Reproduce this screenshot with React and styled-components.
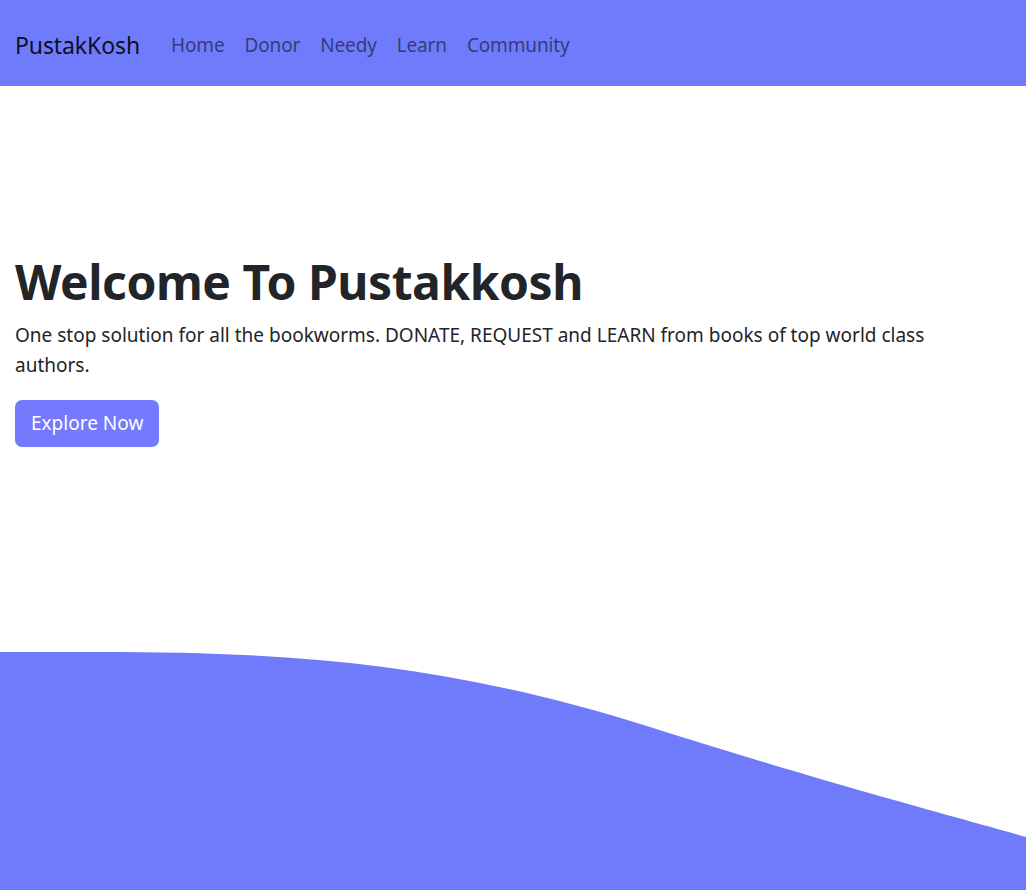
import React from 'react';
import styled, {createGlobalStyle} from "styled-components";

const Global = createGlobalStyle`
  body {
    margin: 0;
    font-family: "Noto Sans", "Open Sans", sans-serif;
    color: #212529;
    background: #fff;
  }
`;

const Page = styled.div`
  min-height: 890px;
  display: flex;
  flex-direction: column;
  overflow: hidden;
`;

const Nav = styled.nav`
  height: 86px;
  background: #707bfb;
  display: flex;
  align-items: center;
  padding: 3px 15px 0;
  box-sizing: border-box;
`;

const Brand = styled.a`
  font-size: 23px;
  color: rgba(0, 0, 0, 0.9);
  margin-right: 21px;
  letter-spacing: -0.1px;
  text-decoration: none;
`;

const Links = styled.ul`
  display: flex;
  list-style: none;
  margin: 0;
  padding: 0;
`;

const Link = styled.li`
  font-size: 19px;
  color: rgba(0, 0, 0, 0.55);
  padding: 0 10px;
  letter-spacing: -0.15px;
`;

const Hero = styled.section`
  padding: 167px 15px 0;
  flex: 1;
`;

const Title = styled.h1`
  font-size: 48px;
  font-weight: 700;
  line-height: 1.2;
  margin: 0 0 9px;
  letter-spacing: -0.45px;
`;

const Lead = styled.p`
  font-size: 19px;
  line-height: 30px;
  margin: 0 0 20px;
  max-width: 940px;
  letter-spacing: 0;
`;

const Button = styled.button`
  font-family: inherit;
  font-size: 19px;
  color: #fff;
  background: #7479fd;
  border: none;
  border-radius: 7px;
  height: 47px;
  padding: 0 16px;
  cursor: pointer;
`;

const Wave = styled.svg`
  display: block;
  width: 100%;
  height: 238px;
`;

const links = ["Home", "Donor", "Needy", "Learn", "Community"];

const App = () => {
    return (
        <Page>
            <Global/>
            <Nav>
                <Brand>PustakKosh</Brand>
                <Links>
                    {links.map(l => <Link key={l}>{l}</Link>)}
                </Links>
            </Nav>
            <Hero>
                <Title>Welcome To Pustakkosh</Title>
                <Lead>One stop solution for all the bookworms. DONATE, REQUEST and LEARN from books of top world class authors.</Lead>
                <Button>Explore Now</Button>
            </Hero>
            <Wave viewBox="0 0 1026 238" preserveAspectRatio="none">
                <path d="M0,0 L100,0 C300,0 450,12 650,75 C850,138 950,163 1026,185 L1026,238 L0,238 Z" fill="#707bfb"/>
            </Wave>
        </Page>
    );
};

export default App;
